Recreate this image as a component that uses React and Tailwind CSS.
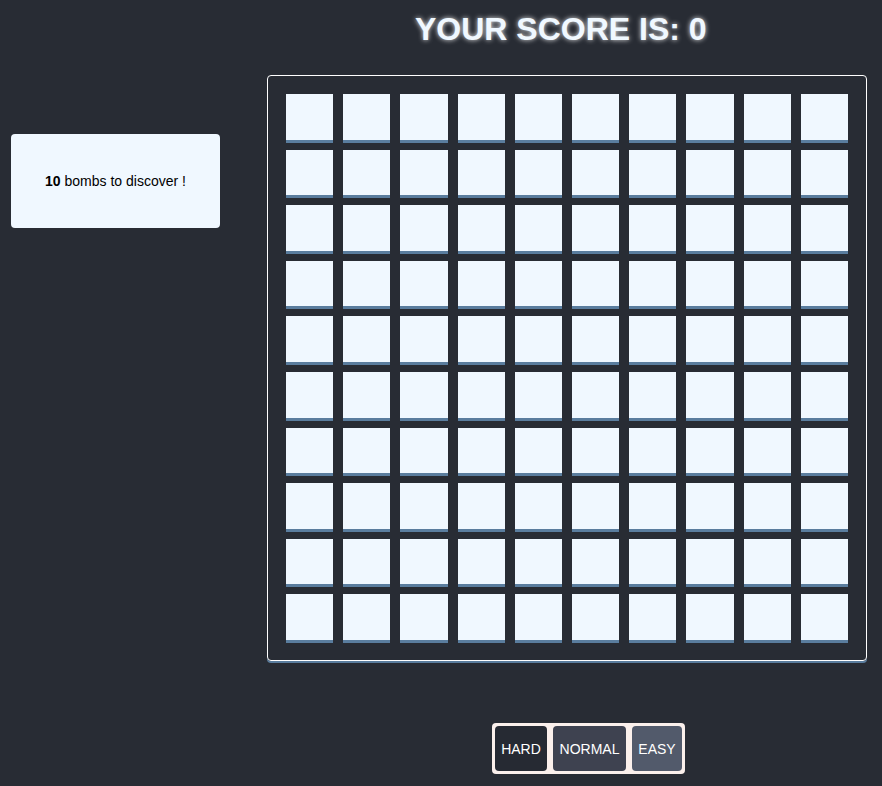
export default function App() {
  const cells = Array.from({ length: 100 }, (_, i) => i)

  return (
    <div className="min-h-screen w-full bg-[#282c34] font-['Liberation_Sans',Arial,sans-serif] overflow-hidden">
      {/* Score title */}
      <h1 className="pl-[415px] pt-[11px] text-[32px] leading-[37px] font-bold text-[#f0f8ff] [text-shadow:0_0_5px_rgba(255,255,255,0.9)]">
        YOUR SCORE IS: 0
      </h1>

      <div className="flex mt-[27px]">
        {/* Info panel */}
        <div className="w-[267px] shrink-0 pl-[11px] pt-[59px]">
          <div className="w-[209px] h-[94px] rounded-[4px] bg-[#f0f8ff] flex items-center justify-center text-[14px] text-black">
            <span>
              <b>10</b> bombs to discover !
            </span>
          </div>
        </div>

        {/* Board */}
        <div className="w-[600px] h-[586px] shrink-0 border border-white rounded-[4px] pt-[18px] pl-[18px] pr-[18px] shadow-[0_2px_0_#5a7d9e]">
          <div className="grid grid-cols-10 grid-rows-10 gap-x-[10px] gap-y-[7px] h-[549px]">
            {cells.map((i) => (
              <div key={i} className="bg-[#f0f8ff] border-b-[3px] border-[#5a7d9e]" />
            ))}
          </div>
        </div>
      </div>

      {/* Difficulty */}
      <div className="ml-[492px] mt-[62px] inline-flex gap-[6px] p-[3px] bg-[#fbf0ec] rounded-[4px]">
        <button className="h-[45px] w-[52px] pt-[2px] rounded-[4px] bg-[#262a33] text-white text-[14px]">HARD</button>
        <button className="h-[45px] w-[73px] pt-[2px] rounded-[4px] bg-[#3e4250] text-white text-[14px]">NORMAL</button>
        <button className="h-[45px] w-[50px] pt-[2px] rounded-[4px] bg-[#525a6b] text-white text-[14px]">EASY</button>
      </div>
    </div>
  )
}
